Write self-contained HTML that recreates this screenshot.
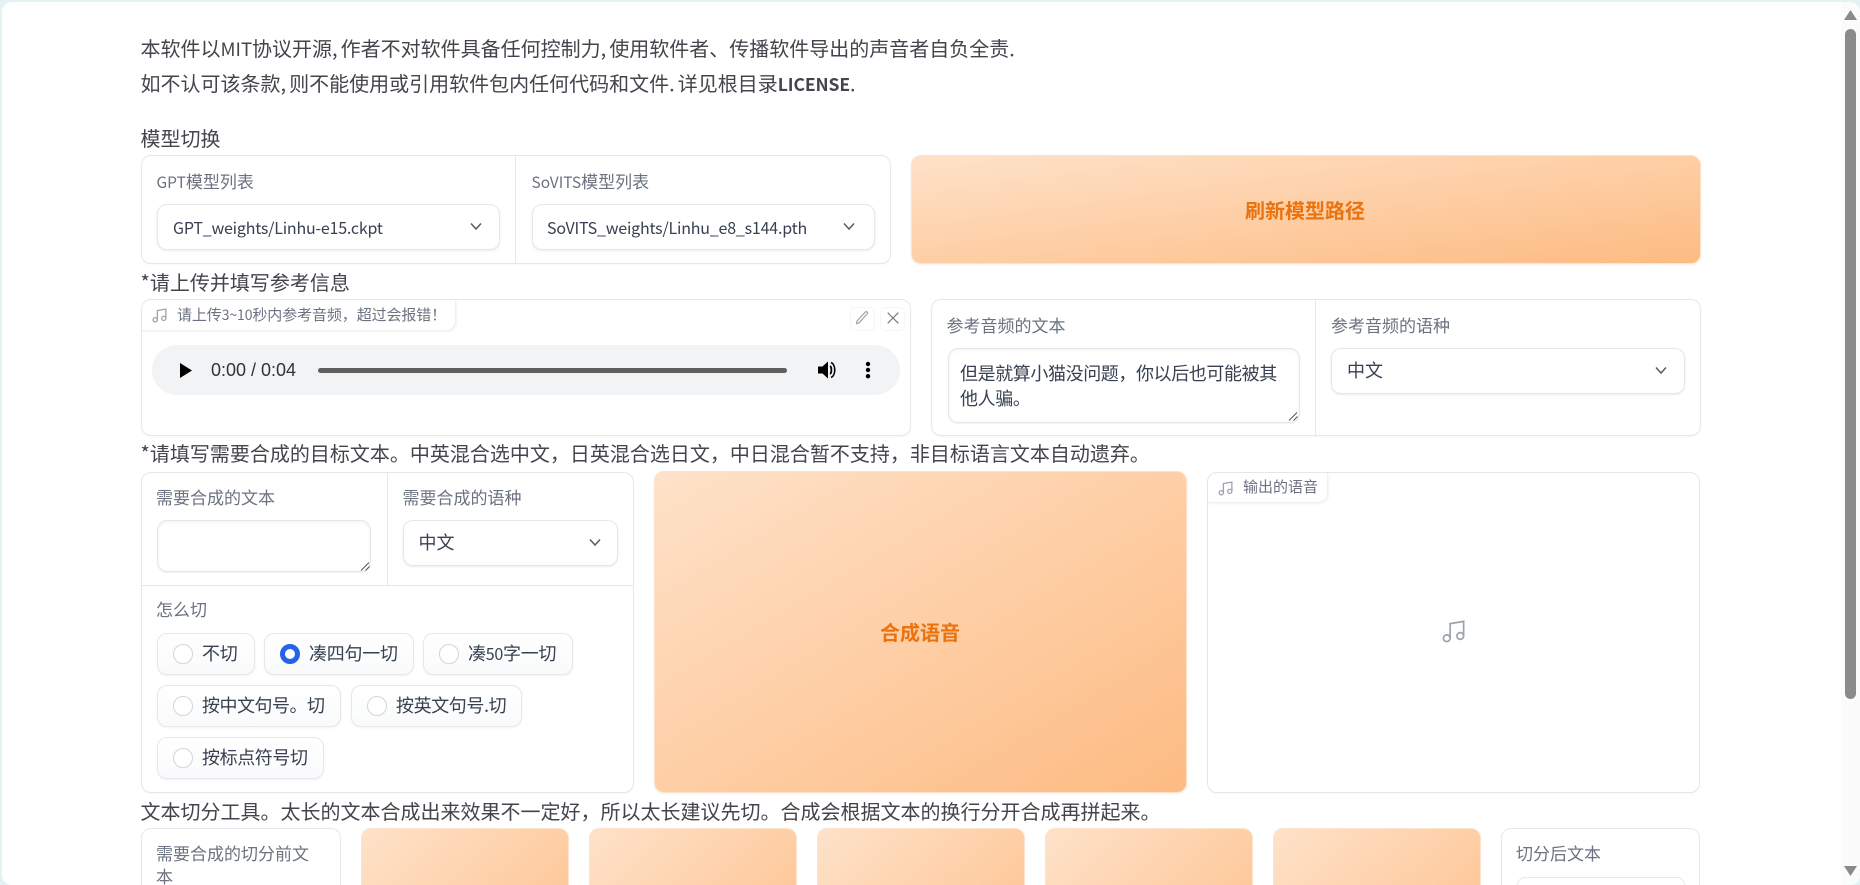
<!DOCTYPE html>
<html lang="zh"><head><meta charset="utf-8"><title>GPT-SoVITS</title>
<style>
html,body{margin:0;padding:0;width:1860px;height:885px;overflow:hidden;background:#e4f2f4}
*{box-sizing:border-box}
#p{position:absolute;left:2px;top:2px;width:1858px;height:883px;background:#fff;border-radius:10px;overflow:hidden}
#c{position:absolute;left:-2px;top:-2px;width:1860px;height:885px;font-family:"Noto Sans CJK SC","Liberation Sans",sans-serif;color:#374151}
.a{position:absolute}
.t{position:absolute;white-space:nowrap}
.h{font-size:20px;line-height:30px;color:#44444c;left:140.5px}
.h u{text-decoration:none;letter-spacing:-.7px}
.h em{font-style:normal;font-size:18.5px}
.h b{font-weight:600;font-size:17.5px;letter-spacing:-.1px}
.l{font-size:17px;line-height:24px;color:#6b7280}
.l em{font-style:normal;font-size:15.5px}
.b{position:absolute;border:1px solid #e5e7eb;border-radius:10px;background:#fff;box-shadow:0 1px 1px rgba(0,0,0,.03)}
.s{position:absolute;border:1px solid #e5e7eb;border-radius:10px;background:#fff;box-shadow:0 1px 2px rgba(0,0,0,.08);height:46px}
.v{font-size:18px;line-height:26px;color:#374151}
.n{font-size:16px;line-height:26px;color:#374151;letter-spacing:-.2px}
.k{letter-spacing:-.4px}
.d{position:absolute;background:#e5e7eb}
.g{position:absolute;border-radius:10px;background:linear-gradient(to bottom right,#fee2c9,#fdbb82);box-shadow:0 1px 2px rgba(0,0,0,.06);border:1px solid #fde3cc}
.g2{background-size:100% 200px;background-repeat:no-repeat;border-bottom:none;border-bottom-left-radius:0;border-bottom-right-radius:0;box-shadow:none}
.b2{border-bottom:none;border-bottom-left-radius:0;border-bottom-right-radius:0;box-shadow:none}
.bt{font-size:20px;line-height:30px;font-weight:700;color:#ea730f}
.r{position:absolute;height:42px;border:1px solid #e5e7eb;border-radius:10px;background:linear-gradient(to bottom,#fff,#f9fafb);box-shadow:0 1px 2px rgba(0,0,0,.05)}
.r i{position:absolute;left:15px;top:10px;width:20px;height:20px;border-radius:50%;border:1px solid #d1d5db;background:#fff}
.r span{position:absolute;left:44px;top:6px;font-size:18px;line-height:26px;white-space:nowrap;color:#374151;letter-spacing:-.25px}
.r span em{font-style:normal;font-size:16px}
.r i.on{background:#fff;border:5.5px solid #2563eb}
.tab{position:absolute;background:#fff;border-right:1px solid #eff0f2;border-bottom:1px solid #eff0f2;border-bottom-right-radius:10px;border-top-left-radius:10px;box-shadow:1px 1px 2px rgba(0,0,0,.05)}
svg{position:absolute;overflow:visible}
</style></head><body>
<div id="p"><div id="c">

<div class="t h" style="top:33px">本软件以<em>MIT</em>协议开源<u>, </u>作者不对软件具备任何控制力<u>, </u>使用软件者、传播软件导出的声音者自负全责.</div>
<div class="t h" style="top:68px">如不认可该条款<u>, </u>则不能使用或引用软件包内任何代码和文件<u>. </u>详见根目录<b>LICENSE</b>.</div>
<div class="t h" style="top:123px">模型切换</div>

<div class="b" style="left:141px;top:155px;width:750px;height:109px"></div>
<div class="d" style="left:515px;top:156px;width:1px;height:107px"></div>
<div class="t l" style="left:156.5px;top:169px"><em>GPT</em>模型列表</div>
<div class="t l" style="left:531.5px;top:169px"><em>SoVITS</em>模型列表</div>
<div class="s" style="left:157px;top:204px;width:343px"></div>
<div class="s" style="left:531.5px;top:204px;width:343px"></div>
<div class="t n" style="left:173px;top:214px">GPT_weights/Linhu-e15.ckpt</div>
<div class="t n" style="left:547px;top:214px">SoVITS_weights/Linhu_e8_s144.pth</div>
<svg style="left:469.5px;top:222px" width="12" height="9" viewBox="0 0 12 9"><path d="M1 1.5 6 7l5-5.5" fill="none" stroke="#555b66" stroke-width="1.5"/></svg>
<svg style="left:843px;top:222px" width="12" height="9" viewBox="0 0 12 9"><path d="M1 1.5 6 7l5-5.5" fill="none" stroke="#555b66" stroke-width="1.5"/></svg>

<div class="g" style="left:911px;top:155px;width:790px;height:109px"></div>
<div class="t bt" style="left:1245px;top:195px">刷新模型路径</div>

<div class="t h" style="top:267px">*请上传并填写参考信息</div>

<div class="b" style="left:141px;top:299px;width:770px;height:137px"></div>
<div class="tab" style="left:142px;top:300px;width:314px;height:31px"></div>
<svg style="left:151px;top:307px" width="17" height="17" viewBox="0 0 24 24" fill="none" stroke="#9ca3af" stroke-width="1.8"><path d="M9 18V5l12-2v13"/><circle cx="6" cy="18" r="3"/><circle cx="18" cy="16" r="3"/></svg>
<div class="t" style="left:177px;top:304px;font-size:15px;line-height:22px;color:#6b7280;letter-spacing:-.1px">请上传<span style="font-size:14px">3~10</span>秒内参考音频，超过会报错！</div>
<div class="a" style="left:850px;top:307px;width:25px;height:24px;border:1px solid #f5f6f7;border-radius:5px"></div>
<div class="a" style="left:880px;top:307px;width:25px;height:24px;border:1px solid #f5f6f7;border-radius:5px"></div>
<svg style="left:855px;top:310px" width="15" height="15" viewBox="0 0 15 15" fill="none" stroke="#9ca3af" stroke-width="1.2"><path d="M2 11 10.5 1.8c.8-.7 2.6.6 2 1.6L4.2 12.8 1.6 13.6Z"/></svg>
<svg style="left:887px;top:312px" width="12" height="12" viewBox="0 0 12 12" fill="none" stroke="#6b7280" stroke-width="1.1"><path d="M.7.7l10.6 10.6M11.3.7.7 11.3"/></svg>

<div class="a" style="left:152px;top:345px;width:748px;height:50px;border-radius:25px;background:#f1f3f4"></div>
<svg style="left:180px;top:363px" width="12" height="15" viewBox="0 0 12 15"><path d="M0 0v15l12-7.5z" fill="#000"/></svg>
<div class="t" style="left:211px;top:359px;font-family:'Liberation Sans',sans-serif;font-size:18px;line-height:22px;color:#333">0:00 / 0:04</div>
<div class="a" style="left:318px;top:368px;width:469px;height:5px;border-radius:3px;background:#5e5e5e"></div>
<svg style="left:817px;top:360px" width="21" height="20" viewBox="0 0 21 20"><path d="M1 6.5h4.5L11 1.5v17l-5.5-5H1z" fill="#000"/><path d="M13 6c1.8 1 1.8 7 0 8" fill="none" stroke="#000" stroke-width="1.8"/><path d="M14 2.5c5 2 5 13 0 15" fill="none" stroke="#000" stroke-width="1.6"/></svg>
<svg style="left:864px;top:361px" width="8" height="18" viewBox="0 0 8 18"><circle cx="4" cy="3" r="2.2"/><circle cx="4" cy="9" r="2.2"/><circle cx="4" cy="15.2" r="2.2"/></svg>

<div class="b" style="left:931px;top:299px;width:770px;height:137px"></div>
<div class="d" style="left:1315px;top:300px;width:1px;height:135px"></div>
<div class="t l" style="left:946.5px;top:313px">参考音频的文本</div>
<div class="t l" style="left:1331px;top:313px">参考音频的语种</div>
<div class="s" style="left:948px;top:348px;width:352px;height:75px;box-shadow:inset 0 1px 3px rgba(0,0,0,.06),0 1px 1px rgba(0,0,0,.05)"></div>
<div class="t v k" style="left:960px;top:360px">但是就算小猫没问题，你以后也可能被其</div>
<div class="t v k" style="left:960px;top:385px">他人骗。</div>
<svg style="left:1288px;top:411px" width="10" height="10" viewBox="0 0 10 10" fill="none" stroke="#555" stroke-width="1"><path d="M1 9.5 9 1.5M5.5 9.5 9.5 5.5"/></svg>
<div class="s" style="left:1331px;top:348px;width:354px"></div>
<div class="t v" style="left:1347px;top:357px">中文</div>
<svg style="left:1654.5px;top:366px" width="12" height="9" viewBox="0 0 12 9"><path d="M1 1.5 6 7l5-5.5" fill="none" stroke="#555b66" stroke-width="1.5"/></svg>

<div class="t h" style="top:438px">*请填写需要合成的目标文本。中英混合选中文，日英混合选日文，中日混合暂不支持，非目标语言文本自动遗弃。</div>

<div class="b" style="left:141px;top:472px;width:493px;height:321px"></div>
<div class="d" style="left:387px;top:473px;width:1px;height:112px"></div>
<div class="d" style="left:142px;top:585px;width:491px;height:1px"></div>
<div class="t l" style="left:156px;top:485px">需要合成的文本</div>
<div class="t l" style="left:402.5px;top:485px">需要合成的语种</div>
<div class="s" style="left:157px;top:520px;width:214px;height:52px;box-shadow:inset 0 1px 3px rgba(0,0,0,.06),0 1px 1px rgba(0,0,0,.05)"></div>
<svg style="left:360px;top:561px" width="10" height="10" viewBox="0 0 10 10" fill="none" stroke="#555" stroke-width="1"><path d="M1 9.5 9 1.5M5.5 9.5 9.5 5.5"/></svg>
<div class="s" style="left:403px;top:520px;width:215px"></div>
<div class="t v" style="left:418.5px;top:529px">中文</div>
<svg style="left:588.5px;top:538px" width="12" height="9" viewBox="0 0 12 9"><path d="M1 1.5 6 7l5-5.5" fill="none" stroke="#555b66" stroke-width="1.5"/></svg>
<div class="t l" style="left:156px;top:597px">怎么切</div>

<div class="r" style="left:157px;top:633px;width:98px"><i></i><span>不切</span></div>
<div class="r" style="left:264px;top:633px;width:150px"><i class="on"></i><span>凑四句一切</span></div>
<div class="r" style="left:423px;top:633px;width:150px"><i></i><span>凑<em>50</em>字一切</span></div>
<div class="r" style="left:157px;top:685px;width:184px"><i></i><span style="letter-spacing:-.5px">按中文句号。切</span></div>
<div class="r" style="left:351px;top:685px;width:171px"><i></i><span style="letter-spacing:-.4px">按英文句号.切</span></div>
<div class="r" style="left:157px;top:737px;width:167px"><i></i><span style="letter-spacing:-.4px">按标点符号切</span></div>

<div class="g" style="left:654px;top:471px;width:533px;height:322px"></div>
<div class="t bt" style="left:880px;top:617px">合成语音</div>

<div class="b" style="left:1207px;top:472px;width:493px;height:321px"></div>
<div class="tab" style="left:1208px;top:473px;width:120px;height:30px"></div>
<svg style="left:1217px;top:480px" width="17" height="17" viewBox="0 0 24 24" fill="none" stroke="#9ca3af" stroke-width="1.8"><path d="M9 18V5l12-2v13"/><circle cx="6" cy="18" r="3"/><circle cx="18" cy="16" r="3"/></svg>
<div class="t" style="left:1243px;top:476px;font-size:15px;line-height:22px;color:#6b7280">输出的语音</div>
<svg style="left:1440px;top:618px" width="27" height="27" viewBox="0 0 24 24" fill="none" stroke="#9ca3af" stroke-width="1.5"><path d="M9 18V5l12-2v13"/><circle cx="6" cy="18" r="3"/><circle cx="18" cy="16" r="3"/></svg>

<div class="t h" style="top:796px">文本切分工具。太长的文本合成出来效果不一定好，所以太长建议先切。合成会根据文本的换行分开合成再拼起来。</div>

<div class="b b2" style="left:141px;top:828px;width:200px;height:57px"></div>
<div class="t l" style="left:156px;top:841px">需要合成的切分前文</div>
<div class="t l" style="left:156px;top:866px;line-height:19px">本</div>
<div class="g g2" style="left:361px;top:828px;width:208px;height:57px"></div>
<div class="g g2" style="left:589px;top:828px;width:208px;height:57px"></div>
<div class="g g2" style="left:817px;top:828px;width:208px;height:57px"></div>
<div class="g g2" style="left:1045px;top:828px;width:208px;height:57px"></div>
<div class="g g2" style="left:1273px;top:828px;width:208px;height:57px"></div>
<div class="b b2" style="left:1501px;top:828px;width:199px;height:57px"></div>
<div class="t l" style="left:1516px;top:841px">切分后文本</div>
<div class="s b2" style="left:1517px;top:877px;width:168px;height:8px"></div>

<div class="a" style="left:1841px;top:0;width:19px;height:885px;background:#fbfbfb"></div>
<div class="a" style="left:1845px;top:29px;width:11px;height:670px;border-radius:6px;background:#8a8a8a"></div>
<svg style="left:1844px;top:10px" width="13" height="10" viewBox="0 0 13 10"><path d="M6.5 0 13 10H0z" fill="#8a8a8a"/></svg>
<svg style="left:1844px;top:866px" width="13" height="10" viewBox="0 0 13 10"><path d="M6.5 10 13 0H0z" fill="#8a8a8a"/></svg>

</div></div>
</body></html>
